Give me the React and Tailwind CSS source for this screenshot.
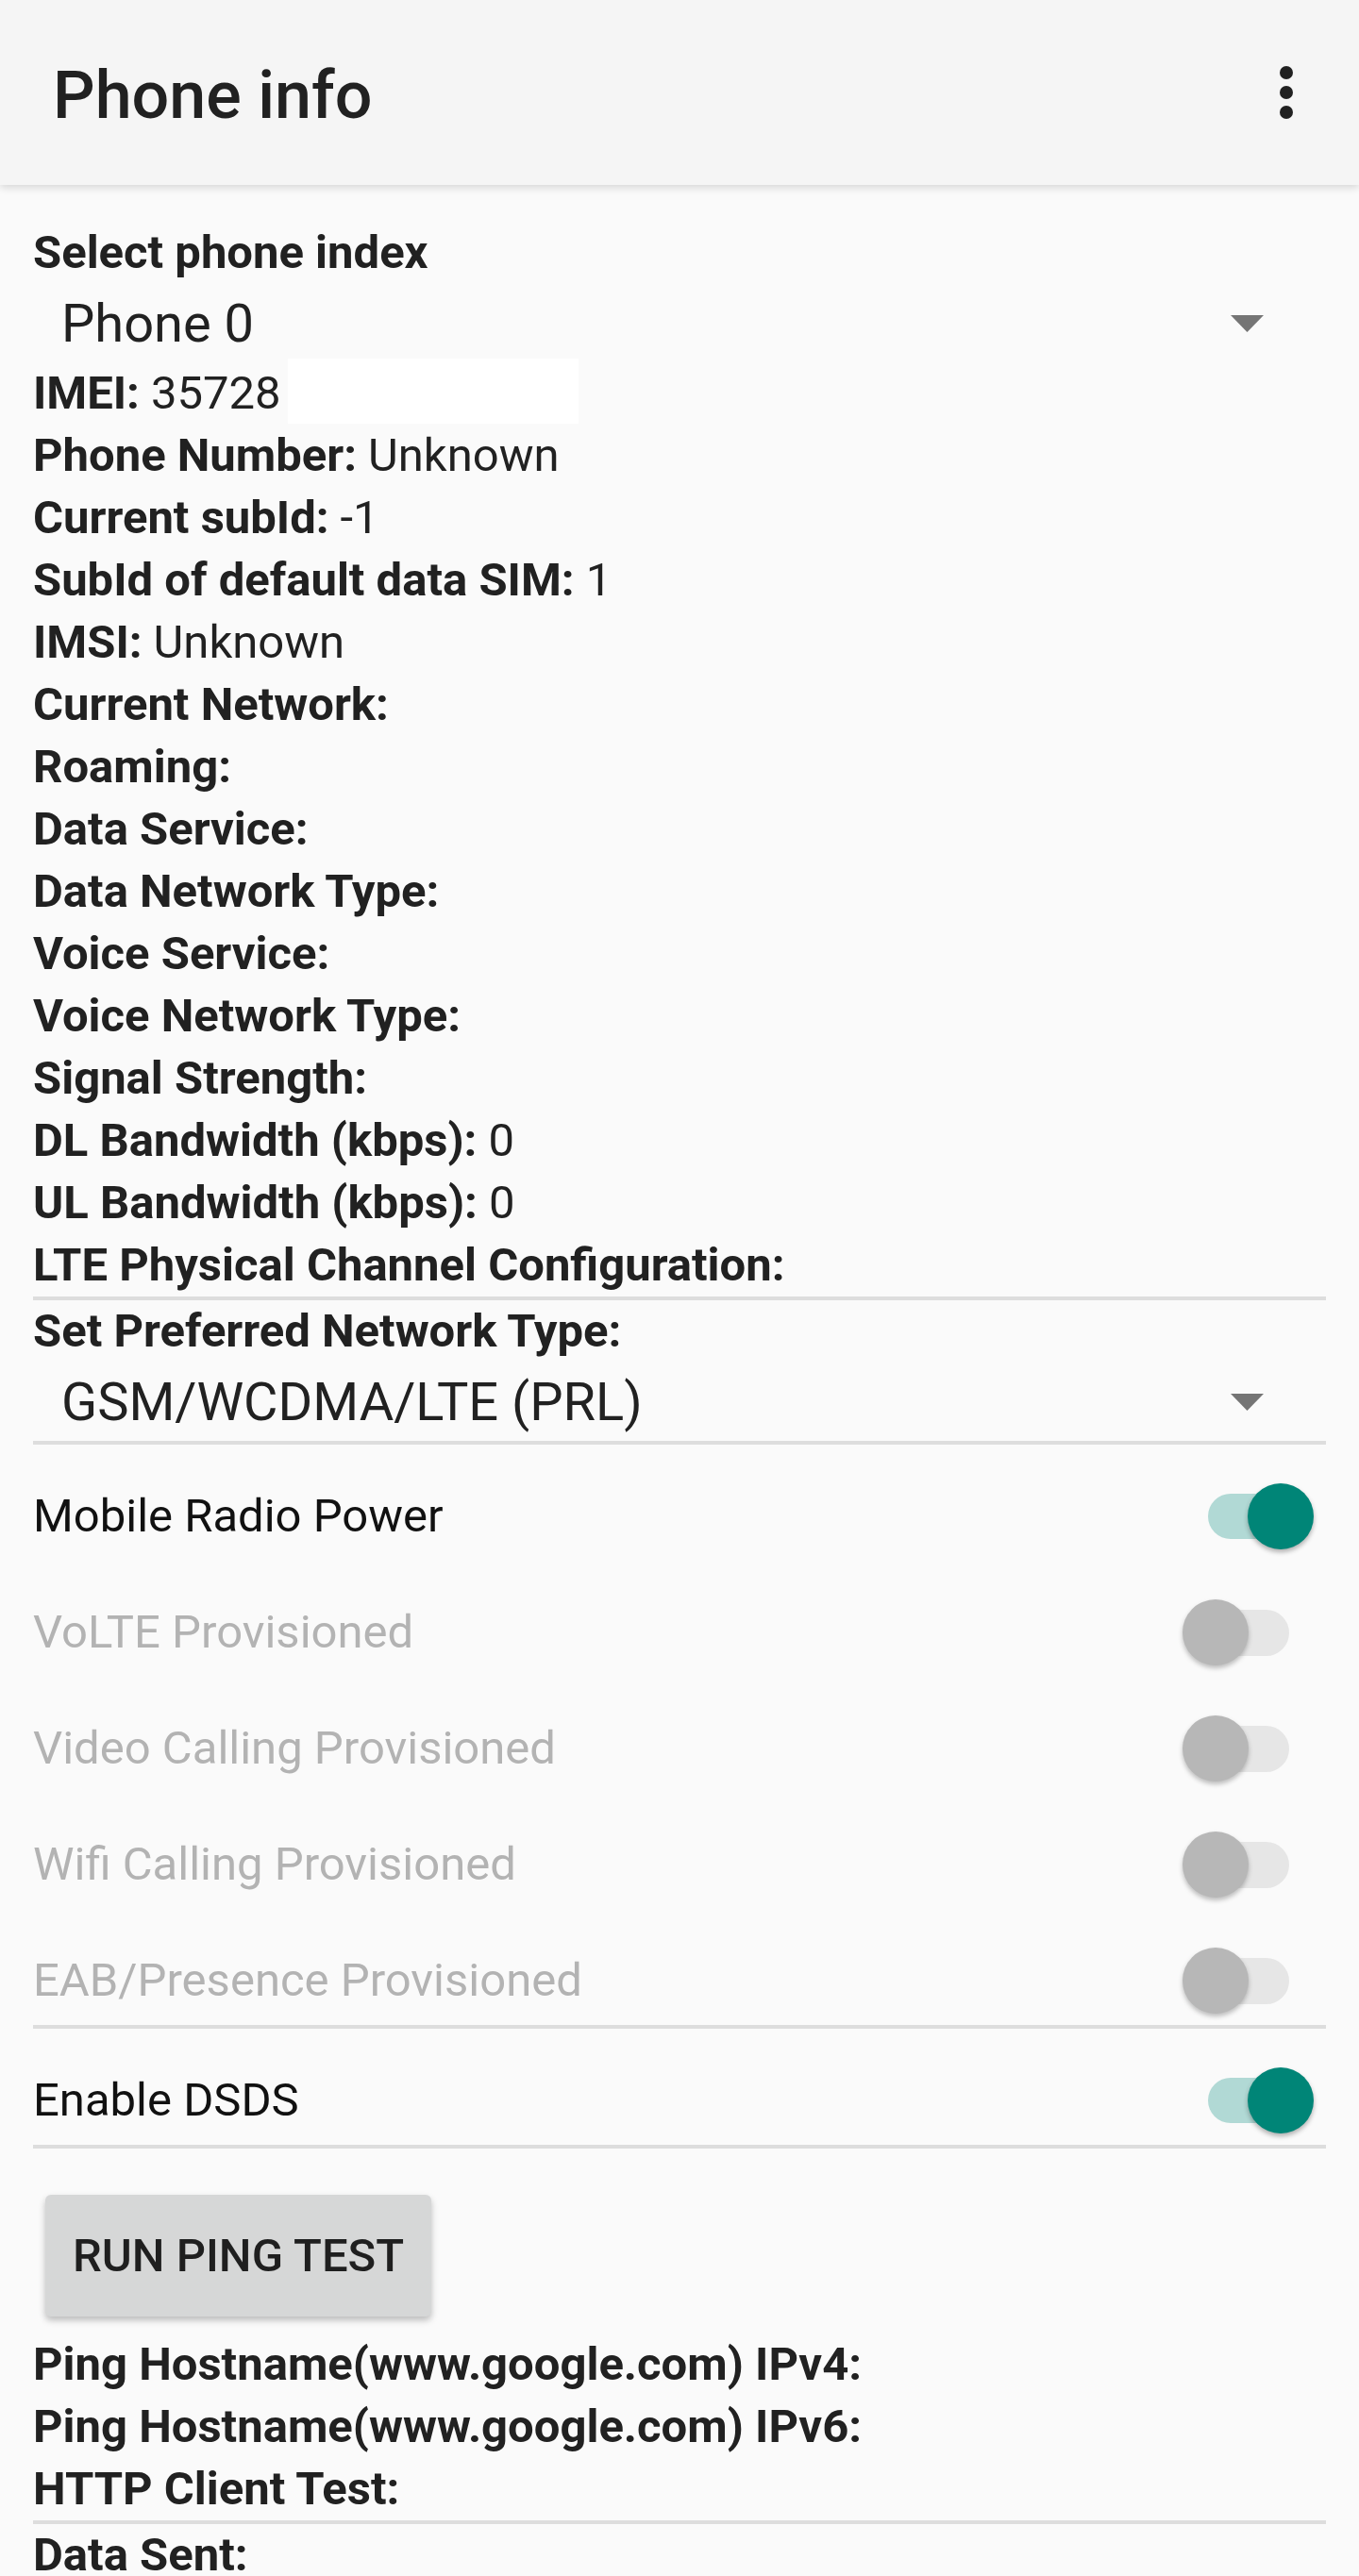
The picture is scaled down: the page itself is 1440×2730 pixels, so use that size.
import React from "react";

const rows = [
  ["Phone Number:", "Unknown"],
  ["Current subId:", "-1"],
  ["SubId of default data SIM:", "1"],
  ["IMSI:", "Unknown"],
  ["Current Network:", ""],
  ["Roaming:", ""],
  ["Data Service:", ""],
  ["Data Network Type:", ""],
  ["Voice Service:", ""],
  ["Voice Network Type:", ""],
  ["Signal Strength:", ""],
  ["DL Bandwidth (kbps):", "0"],
  ["UL Bandwidth (kbps):", "0"],
  ["LTE Physical Channel Configuration:", ""],
];

function InfoRow({ label, value, children }) {
  return (
    <div className="flex h-[66px] items-start text-[49px] leading-[66px] text-[#212121] whitespace-nowrap">
      <span className="font-bold">{label}</span>
      {value ? <span className="ml-[12px] font-normal">{value}</span> : null}
      {children}
    </div>
  );
}

function Divider() {
  return <div className="h-[4px] bg-[#dddddd]" />;
}

function Spinner({ text }) {
  return (
    <div className="flex h-[83px] items-center justify-between pl-[30px] pr-[66px]">
      <span className="text-[56px] leading-[66px] text-[#212121]">{text}</span>
      <svg width="35" height="18" viewBox="0 0 35 18" className="mt-[1px]">
        <polygon points="0,0 35,0 17.5,18" fill="#757575" />
      </svg>
    </div>
  );
}

function Toggle({ on }) {
  if (on) {
    return (
      <div className="relative mr-[13px] h-[70px] w-[112px] shrink-0">
        <div className="absolute left-0 top-[11px] h-[48px] w-[100px] rounded-full bg-[#b1d9d5]" />
        <div className="absolute right-0 top-0 h-[70px] w-[70px] rounded-full bg-[#008577] shadow-[0_3px_5px_rgba(0,0,0,0.3)]" />
      </div>
    );
  }
  return (
    <div className="relative mr-[39px] h-[70px] w-[113px] shrink-0">
      <div className="absolute right-0 top-[11px] h-[49px] w-[100px] rounded-full bg-[#e6e6e6]" />
      <div className="absolute left-0 top-0 h-[70px] w-[70px] rounded-full bg-[#b7b7b7] shadow-[0_3px_5px_rgba(0,0,0,0.25)]" />
    </div>
  );
}

function SwitchRow({ label, on, disabled }) {
  return (
    <div className="flex h-[123px] items-center justify-between pt-[29px]">
      <span
        className={
          "text-[49px] leading-[66px] " +
          (disabled ? "text-[#b3b3b3]" : "text-[#111111]")
        }
      >
        {label}
      </span>
      <Toggle on={on} />
    </div>
  );
}

export default function App() {
  return (
    <div className="h-[2730px] w-[1440px] overflow-hidden bg-[#fafafa] font-['Roboto',_'Noto_Sans',_sans-serif]">
      <header className="relative z-10 flex h-[196px] items-center justify-between bg-[#f5f5f5] pl-[56px] pr-[35px] shadow-[0_3px_8px_rgba(0,0,0,0.14)]">
        <h1 className="mt-[5px] text-[70px] font-medium leading-[70px] text-[#212121]">
          Phone info
        </h1>
        <svg width="84" height="84" viewBox="0 0 84 84">
          <circle cx="42" cy="21" r="7" fill="#212121" />
          <circle cx="42" cy="42" r="7" fill="#212121" />
          <circle cx="42" cy="63" r="7" fill="#212121" />
        </svg>
      </header>

      <main className="px-[35px] pt-[39px]">
        <InfoRow label="Select phone index" />
        <Spinner text="Phone 0" />
        <InfoRow label="IMEI:" value="35728">
          <div className="-mt-[4px] ml-[7px] h-[69px] w-[308px] bg-white" />
        </InfoRow>
        {rows.map(([l, v]) => (
          <InfoRow key={l} label={l} value={v} />
        ))}
        <Divider />
        <InfoRow label="Set Preferred Network Type:" />
        <Spinner text="GSM/WCDMA/LTE (PRL)" />
        <Divider />

        <SwitchRow label="Mobile Radio Power" on />
        <SwitchRow label="VoLTE Provisioned" disabled />
        <SwitchRow label="Video Calling Provisioned" disabled />
        <SwitchRow label="Wifi Calling Provisioned" disabled />
        <SwitchRow label="EAB/Presence Provisioned" disabled />
        <Divider />
        <SwitchRow label="Enable DSDS" on />
        <Divider />

        <button className="ml-[13px] mt-[49px] flex h-[129px] w-[409px] items-center justify-center rounded-[6px] bg-[#d6d7d7] text-[49px] font-medium leading-none text-[#1f1f1f] shadow-[0_4px_7px_rgba(0,0,0,0.25)]">
          RUN PING TEST
        </button>

        <div className="mt-[18px]">
          <InfoRow label="Ping Hostname(www.google.com) IPv4:" />
          <InfoRow label="Ping Hostname(www.google.com) IPv6:" />
          <InfoRow label="HTTP Client Test:" />
        </div>
        <Divider />
        <InfoRow label="Data Sent:" />
      </main>
    </div>
  );
}
